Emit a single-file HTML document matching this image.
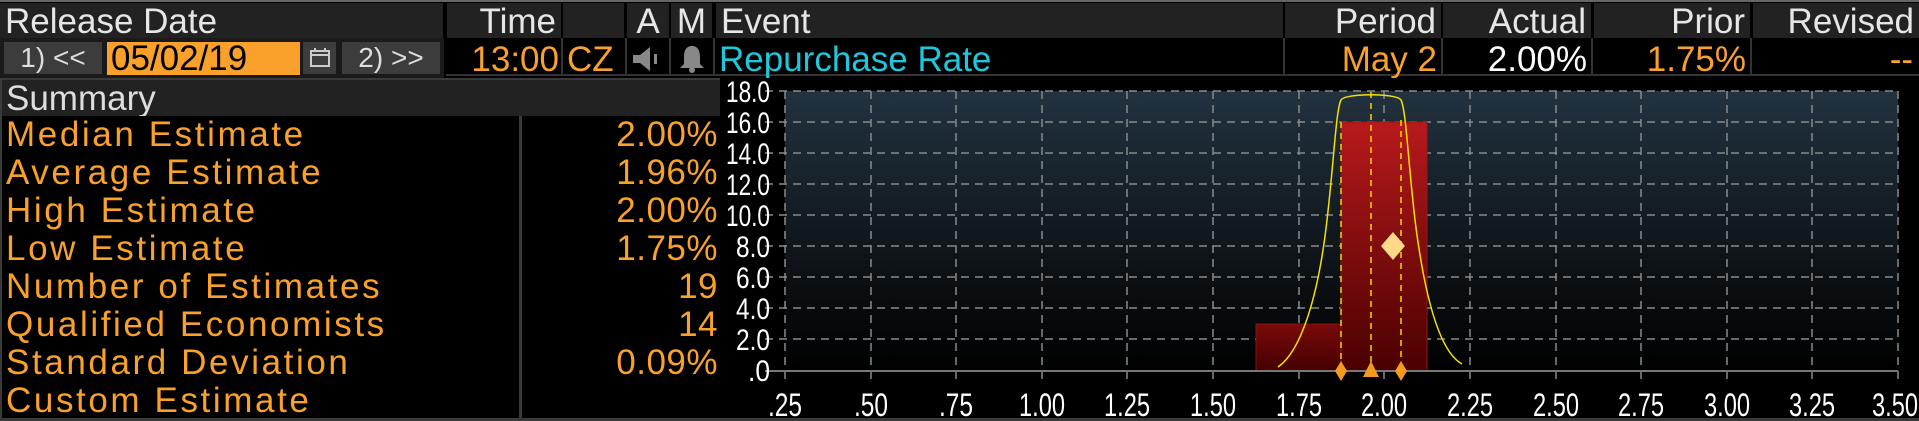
<!DOCTYPE html>
<html><head><meta charset="utf-8"><style>
*{margin:0;padding:0;box-sizing:border-box}
body{width:1919px;height:421px;background:#000;overflow:hidden;font-family:"Liberation Sans",sans-serif;position:relative}
.a{position:absolute;white-space:nowrap;line-height:1}
.hd{position:absolute;top:3px;height:35px;background:#222;color:#e6e6e6;font-size:35px;line-height:37px;padding:0 5px;white-space:nowrap}
.r{text-align:right}
.o{color:#f9a12b}
.lab{position:absolute;left:6px;font-size:35px;color:#f9a12b;letter-spacing:2.6px;line-height:38px;white-space:nowrap}
.val{position:absolute;font-size:35px;color:#f9a12b;letter-spacing:0.5px;line-height:38px;text-align:right}
.btn{position:absolute;top:42px;height:32px;background:#3c3c3c;color:#ddd;font-size:28px;line-height:32px;text-align:center}
</style></head><body>
<div style="position:absolute;left:0;top:0;width:1919px;height:2px;background:#666"></div>
<div class="hd" style="left:0;width:443px">Release Date</div>
<div class="hd r" style="left:447px;width:114px">Time</div>
<div class="hd" style="left:563px;width:61px"></div>
<div class="hd" style="left:627px;width:42px;text-align:center;padding:0">A</div>
<div class="hd" style="left:671px;width:41px;text-align:center;padding:0">M</div>
<div class="hd" style="left:716px;width:567px">Event</div>
<div class="hd r" style="left:1285px;width:156px">Period</div>
<div class="hd r" style="left:1443px;width:148px">Actual</div>
<div class="hd r" style="left:1594px;width:156px">Prior</div>
<div class="hd r" style="left:1753px;width:166px">Revised</div>
<div style="position:absolute;left:0;top:38px;width:444px;height:40px;background:#1a1a1a"></div>
<div class="btn" style="left:4px;width:98px">1) &lt;&lt;</div>
<div class="a" style="left:107px;top:42px;width:193px;height:33px;background:#f9a12b;color:#000;font-size:35px;line-height:34px;padding-left:4px">05/02/19</div>
<div class="btn" style="left:303px;width:33px"><svg width="22" height="22" viewBox="0 0 22 22" style="margin-top:5px"><rect x="2" y="4" width="18" height="15" fill="none" stroke="#ccc" stroke-width="2"/><line x1="2" y1="8" x2="20" y2="8" stroke="#ccc" stroke-width="2"/><line x1="6" y1="1" x2="6" y2="5" stroke="#ccc" stroke-width="2"/><line x1="16" y1="1" x2="16" y2="5" stroke="#ccc" stroke-width="2"/></svg></div>
<div class="btn" style="left:342px;width:98px">2) &gt;&gt;</div>
<div style="position:absolute;left:446px;top:38px;width:1473px;height:38px;background:#000;border-bottom:2px solid #333"></div>
<div style="position:absolute;left:561px;top:38px;width:2px;height:38px;background:#333"></div>
<div style="position:absolute;left:625px;top:38px;width:2px;height:38px;background:#333"></div>
<div style="position:absolute;left:669px;top:38px;width:2px;height:38px;background:#333"></div>
<div style="position:absolute;left:713px;top:38px;width:2px;height:38px;background:#333"></div>
<div style="position:absolute;left:1283px;top:38px;width:2px;height:38px;background:#333"></div>
<div style="position:absolute;left:1441px;top:38px;width:2px;height:38px;background:#333"></div>
<div style="position:absolute;left:1591px;top:38px;width:2px;height:38px;background:#333"></div>
<div style="position:absolute;left:1750px;top:38px;width:2px;height:38px;background:#333"></div>
<div class="a o r" style="left:447px;top:42px;width:112px;font-size:35px">13:00</div>
<div class="a o" style="left:567px;top:42px;font-size:35px">CZ</div>
<svg style="position:absolute;left:630px;top:44px" width="36" height="30"><path d="M3,11 h7 l10,-8 v24 l-10,-8 h-7z" fill="#888"/><rect x="24" y="10" width="3" height="10" fill="#888"/></svg>
<svg style="position:absolute;left:676px;top:44px" width="32" height="30"><path d="M16,2 C10,2 8,7 8,13 v7 l-4,4 h24 l-4,-4 v-7 C24,7 22,2 16,2z" fill="#888"/><circle cx="16" cy="26" r="3" fill="#888"/></svg>
<div class="a" style="left:719px;top:42px;font-size:35px;color:#1ec8dc">Repurchase Rate</div>
<div class="a o r" style="left:1285px;top:42px;width:152px;font-size:35px">May 2</div>
<div class="a r" style="left:1443px;top:42px;width:144px;font-size:35px;color:#fff">2.00%</div>
<div class="a o r" style="left:1594px;top:42px;width:152px;font-size:35px">1.75%</div>
<div class="a o r" style="left:1753px;top:42px;width:160px;font-size:35px">--</div>
<div style="position:absolute;left:0;top:78px;width:720px;height:343px;background:#3a3a3a"></div>
<div style="position:absolute;left:2px;top:80px;width:718px;height:36px;background:#222;color:#ddd;font-size:35px;line-height:38px;padding-left:4px">Summary</div>
<div style="position:absolute;left:2px;top:116px;width:517px;height:302px;background:#000"></div>
<div style="position:absolute;left:522px;top:116px;width:198px;height:302px;background:#000"></div>
<div style="position:absolute;left:722px;top:78px;width:1197px;height:343px;background:#000"></div>
<div class="lab" style="top:116px">Median Estimate</div>
<div class="lab" style="top:154px">Average Estimate</div>
<div class="lab" style="top:192px">High Estimate</div>
<div class="lab" style="top:230px">Low Estimate</div>
<div class="lab" style="top:268px">Number of Estimates</div>
<div class="lab" style="top:306px">Qualified Economists</div>
<div class="lab" style="top:344px">Standard Deviation</div>
<div class="lab" style="top:382px">Custom Estimate</div>
<div class="val" style="top:116px;left:520px;width:198px">2.00%</div>
<div class="val" style="top:154px;left:520px;width:198px">1.96%</div>
<div class="val" style="top:192px;left:520px;width:198px">2.00%</div>
<div class="val" style="top:230px;left:520px;width:198px">1.75%</div>
<div class="val" style="top:268px;left:520px;width:198px">19</div>
<div class="val" style="top:306px;left:520px;width:198px">14</div>
<div class="val" style="top:344px;left:520px;width:198px">0.09%</div>
<svg style="position:absolute;left:0;top:0" width="1919" height="421" font-family="Liberation Sans, sans-serif">
<defs>
<linearGradient id="bg" x1="0" y1="0" x2="0" y2="1"><stop offset="0" stop-color="#22323f"/><stop offset="1" stop-color="#000"/></linearGradient>
<linearGradient id="rd" x1="0" y1="0" x2="0" y2="1"><stop offset="0" stop-color="#b81a1c"/><stop offset="1" stop-color="#4a0000"/></linearGradient>
<linearGradient id="rd2" x1="0" y1="0" x2="0" y2="1"><stop offset="0" stop-color="#7a0a0a"/><stop offset="1" stop-color="#450000"/></linearGradient>
</defs>
<rect x="785" y="91" width="1113" height="280" fill="url(#bg)"/>
<g stroke="#8a8a8a" stroke-width="1.5" stroke-dasharray="8,6">
<line x1="765" y1="91" x2="1898" y2="91"/><line x1="765" y1="122" x2="1898" y2="122"/><line x1="765" y1="153" x2="1898" y2="153"/><line x1="765" y1="184" x2="1898" y2="184"/><line x1="765" y1="215" x2="1898" y2="215"/><line x1="765" y1="246" x2="1898" y2="246"/><line x1="765" y1="277" x2="1898" y2="277"/><line x1="765" y1="308" x2="1898" y2="308"/><line x1="765" y1="339" x2="1898" y2="339"/>
<line x1="785" y1="91" x2="785" y2="380"/><line x1="871" y1="91" x2="871" y2="380"/><line x1="956" y1="91" x2="956" y2="380"/><line x1="1042" y1="91" x2="1042" y2="380"/><line x1="1127" y1="91" x2="1127" y2="380"/><line x1="1213" y1="91" x2="1213" y2="380"/><line x1="1299" y1="91" x2="1299" y2="380"/><line x1="1384" y1="91" x2="1384" y2="380"/><line x1="1470" y1="91" x2="1470" y2="380"/><line x1="1556" y1="91" x2="1556" y2="380"/><line x1="1641" y1="91" x2="1641" y2="380"/><line x1="1727" y1="91" x2="1727" y2="380"/><line x1="1812" y1="91" x2="1812" y2="380"/><line x1="1898" y1="91" x2="1898" y2="380"/>
</g>
<rect x="1256" y="324" width="85" height="47" fill="url(#rd2)" stroke="#8a1010"/>
<rect x="1341" y="122" width="86" height="249" fill="url(#rd)" stroke="#9a1414"/>
<line x1="765" y1="371" x2="1898" y2="371" stroke="#777" stroke-width="2"/>
<g stroke="#f5d800" stroke-width="1.5" stroke-dasharray="6,5"><line x1="1341" y1="122" x2="1341" y2="371"/><line x1="1371" y1="92" x2="1371" y2="371"/><line x1="1401" y1="120" x2="1401" y2="371"/></g>
<path d="M1278,367 C1300,352 1318,300 1327,220 C1334,160 1336,110 1341,100 C1345,93 1397,93 1401,100 C1406,110 1408,160 1415,220 C1425,300 1440,352 1462,364" fill="none" stroke="#f5e000" stroke-width="1.5"/>
<path d="M1381,246 l12,-14 l12,14 l-12,14z" fill="#ffd98a"/>
<path d="M1341,361 l6,10 l-6,10 l-6,-10z" fill="#f29b1c"/>
<path d="M1401,361 l6,10 l-6,10 l-6,-10z" fill="#f29b1c"/>
<path d="M1371,361 l8,16 l-16,0z" fill="#f29b1c"/>
<g fill="#fff" font-size="30" text-anchor="end">
<text x="770" y="102" textLength="44" lengthAdjust="spacingAndGlyphs">18.0</text><text x="770" y="133" textLength="44" lengthAdjust="spacingAndGlyphs">16.0</text><text x="770" y="164" textLength="44" lengthAdjust="spacingAndGlyphs">14.0</text><text x="770" y="195" textLength="44" lengthAdjust="spacingAndGlyphs">12.0</text><text x="770" y="226" textLength="44" lengthAdjust="spacingAndGlyphs">10.0</text><text x="770" y="257" textLength="34" lengthAdjust="spacingAndGlyphs">8.0</text><text x="770" y="288" textLength="34" lengthAdjust="spacingAndGlyphs">6.0</text><text x="770" y="319" textLength="34" lengthAdjust="spacingAndGlyphs">4.0</text><text x="770" y="350" textLength="34" lengthAdjust="spacingAndGlyphs">2.0</text><text x="770" y="381" textLength="22" lengthAdjust="spacingAndGlyphs">.0</text>
</g>
<g fill="#fff" font-size="32" text-anchor="middle">
<text x="785" y="416" textLength="34" lengthAdjust="spacingAndGlyphs">.25</text><text x="871" y="416" textLength="34" lengthAdjust="spacingAndGlyphs">.50</text><text x="956" y="416" textLength="34" lengthAdjust="spacingAndGlyphs">.75</text><text x="1042" y="416" textLength="46" lengthAdjust="spacingAndGlyphs">1.00</text><text x="1127" y="416" textLength="46" lengthAdjust="spacingAndGlyphs">1.25</text><text x="1213" y="416" textLength="46" lengthAdjust="spacingAndGlyphs">1.50</text><text x="1299" y="416" textLength="46" lengthAdjust="spacingAndGlyphs">1.75</text><text x="1384" y="416" textLength="46" lengthAdjust="spacingAndGlyphs">2.00</text><text x="1470" y="416" textLength="46" lengthAdjust="spacingAndGlyphs">2.25</text><text x="1556" y="416" textLength="46" lengthAdjust="spacingAndGlyphs">2.50</text><text x="1641" y="416" textLength="46" lengthAdjust="spacingAndGlyphs">2.75</text><text x="1727" y="416" textLength="46" lengthAdjust="spacingAndGlyphs">3.00</text><text x="1812" y="416" textLength="46" lengthAdjust="spacingAndGlyphs">3.25</text><text x="1895" y="416" textLength="46" lengthAdjust="spacingAndGlyphs">3.50</text>
</g>
<rect x="0" y="418" width="1919" height="3" fill="#3a3a3a"/>
</svg>
</body></html>
